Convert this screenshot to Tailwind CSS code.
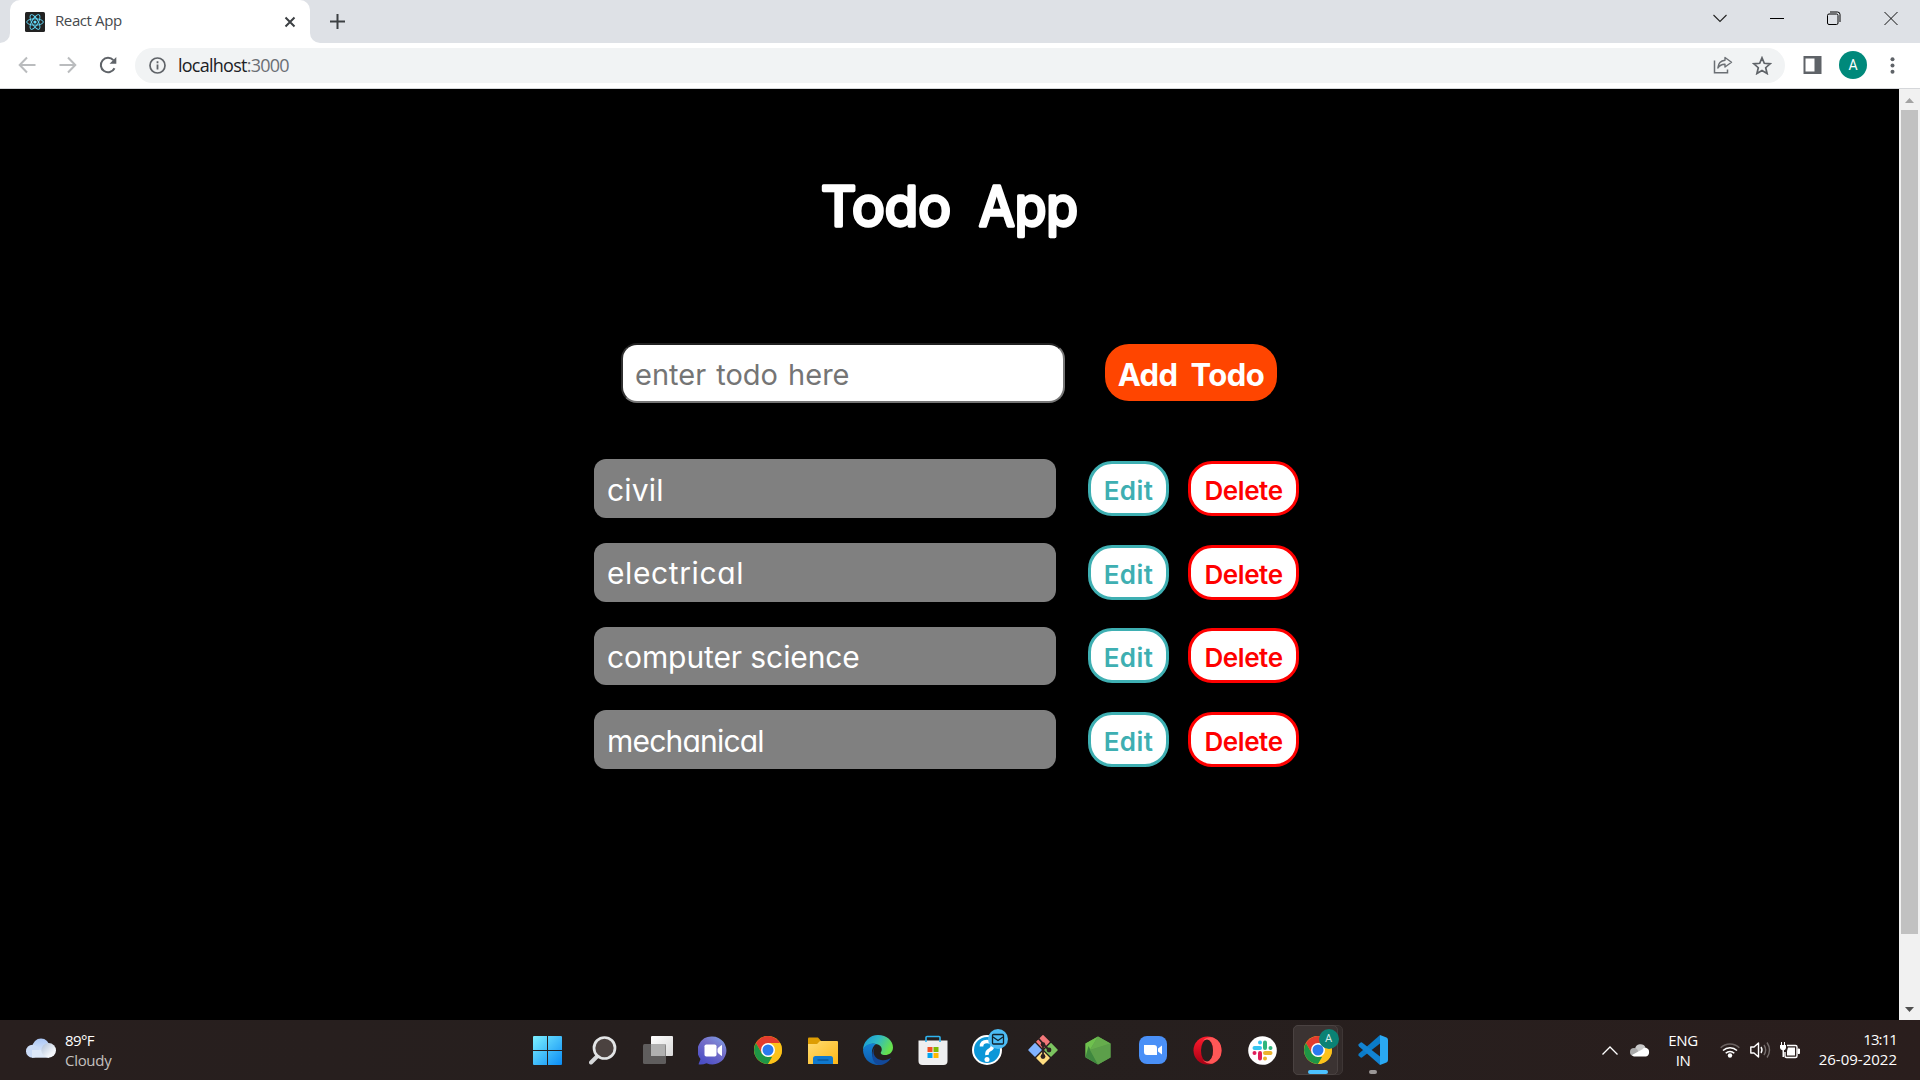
<!DOCTYPE html>
<html lang="en">
<head>
<meta charset="utf-8">
<title>React App</title>
<script src="https://cdn.jsdelivr.net/npm/@tailwindcss/browser@4"></script>
</head>
<body class="w-[1920px] h-[1080px] overflow-hidden flex flex-col bg-black font-['Open_Sans','Noto_Sans',sans-serif]">

<!-- tab strip -->
<header class="h-[43px] shrink-0 bg-[#dee1e6] flex">
  <div class="w-[10px] bg-white"><div class="w-full h-full bg-[#dee1e6] rounded-br-[10px]"></div></div>
  <div class="w-[300px] bg-white rounded-t-[10px] flex items-center pl-[15px] pr-[14px]">
    <svg class="w-5 h-5 shrink-0" viewBox="0 0 20 20"><rect width="20" height="20" rx="1.5" fill="#222"/><g fill="none" stroke="#61dafb" stroke-width=".9"><ellipse cx="10" cy="10" rx="8.3" ry="3.2"/><ellipse cx="10" cy="10" rx="8.3" ry="3.2" transform="rotate(60 10 10)"/><ellipse cx="10" cy="10" rx="8.3" ry="3.2" transform="rotate(120 10 10)"/></g><circle cx="10" cy="10" r="1.6" fill="#61dafb"/></svg>
    <span class="ml-[10px] -mt-[3px] text-[15px] leading-5 tracking-[-0.4px] text-[#45494d]">React App</span>
    <svg class="ml-auto w-[12px] h-[12px]" viewBox="0 0 12 12"><path d="M1.5 1.5l9 9M10.500 1.500l-9 9" stroke="#3c4043" stroke-width="2"/></svg>
  </div>
  <div class="w-[10px] bg-white"><div class="w-full h-full bg-[#dee1e6] rounded-bl-[10px]"></div></div>
  <svg class="ml-[10px] mt-[14px] w-[15px] h-[15px]" viewBox="0 0 15 15"><path d="M7.500 0v15M0 7.500h15" stroke="#3c4043" stroke-width="2"/></svg>
  <div class="ml-auto flex gap-[43px] pt-[11px] pr-[22px]">
    <svg class="w-[14px] h-[14px]" viewBox="0 0 14 14"><path d="M.5 4l6.500 6.500L13.500 4" fill="none" stroke="#222" stroke-width="1.100"/></svg>
    <svg class="w-[14px] h-[14px]" viewBox="0 0 14 14"><path d="M0 7.500h14" stroke="#000"/></svg>
    <svg class="w-[14px] h-[14px]" viewBox="0 0 14 14"><rect x=".5" y="3" width="10.500" height="10.500" rx="1.500" fill="none" stroke="#000"/><path d="M3 1h7.500q2.500 0 2.500 2.500V11" fill="none" stroke="#000"/></svg>
    <svg class="w-[14px] h-[14px]" viewBox="0 0 14 14"><path d="M.5 1l13 13M13.500 1l-13 13" stroke="#111"/></svg>
  </div>
</header>

<!-- toolbar -->
<div class="h-[46px] shrink-0 bg-white border-b border-[#d5d7da] flex items-center pl-[18px] pr-[25px] pb-px">
  <svg class="w-[18px] h-[18px]" viewBox="0 0 18 18"><path d="M17.500 9H2M9 1.500L1.700 9 9 16.500" fill="none" stroke="#babcbe" stroke-width="2"/></svg>
  <svg class="ml-[23px] w-[18px] h-[18px]" viewBox="0 0 18 18"><path d="M.5 9H16M9 1.500L16.300 9 9 16.500" fill="none" stroke="#babcbe" stroke-width="2"/></svg>
  <svg class="ml-[22px] w-[18px] h-[18px]" viewBox="0 0 18 18"><path d="M15.500 12.200A7.200 7.200 0 1 1 14.400 4.200" fill="none" stroke="#5f6368" stroke-width="2"/><path d="M17.300 1v6.700h-6.700z" fill="#5f6368"/></svg>
  <div class="ml-[18px] flex-1 h-[35px] rounded-full bg-[#f1f3f4] flex items-center pl-[14px] pr-[13px]">
    <svg class="w-[17px] h-[17px]" viewBox="0 0 17 17"><circle cx="8.500" cy="8.500" r="7.500" fill="none" stroke="#5f6368" stroke-width="1.700"/><path d="M8.500 7.400v5M8.500 4.300v1.900" stroke="#5f6368" stroke-width="1.800"/></svg>
    <span class="ml-[12px] text-[18px] leading-6 tracking-[-0.75px] text-[#202124]">localhost<span class="text-[#6b6f74]">:3000</span></span>
    <svg class="ml-auto w-[20px] h-[18px]" viewBox="0 0 20 18"><path d="M1.500 4.500V16.800H14.500V13.500" fill="none" stroke="#6b6f74" stroke-width="1.500"/><path d="M12 1.500L18.500 6.300 12 11V8.200Q7.500 8 4.800 12 5.500 5 12 4.300z" fill="none" stroke="#6b6f74" stroke-width="1.400" stroke-linejoin="round"/></svg>
    <svg class="ml-[19px] w-[20px] h-[19px]" viewBox="0 0 20 19"><path d="M10 1.800l2.300 5.500 5.900.5-4.500 3.900 1.400 5.800L10 14.400l-5.100 3.100 1.400-5.800L1.800 7.800l5.900-.5z" fill="none" stroke="#5f6368" stroke-width="1.700"/></svg>
  </div>
  <svg class="ml-[18px] w-[19px] h-[18px]" viewBox="0 0 19 18"><path fill="#5f6368" fill-rule="evenodd" d="M.5 0H18.500V18H.5zM2.500 2.500V15.500H11.500V2.500z"/></svg>
  <div class="ml-[17px] w-7 h-7 rounded-full bg-[#00897b] text-white text-[14px] leading-7 text-center font-[Roboto]">A</div>
  <svg class="ml-[23px] w-[5px] h-[17px]" viewBox="0 0 5 17"><g fill="#5f6368"><circle cx="2.500" cy="2.200" r="2"/><circle cx="2.500" cy="8.500" r="2"/><circle cx="2.500" cy="14.800" r="2"/></g></svg>
</div>

<!-- page -->
<div class="h-[931px] shrink-0 flex">
  <main class="w-[1899px] bg-black text-white font-['Comic_Sans_MS',Inter,sans-serif] [font-feature-settings:'cv11'_1]">
    <h1 class="pt-[71px] h-[254px] flex justify-center">
      <svg class="w-[280px] h-[100px] overflow-visible" viewBox="0 0 280 100" font-size="54.500" font-weight="400" fill="#fff" stroke="#fff" stroke-width="3.500" stroke-linejoin="round"><text x="11" y="66" textLength="130" lengthAdjust="spacingAndGlyphs">Todo</text><text x="169" y="66" textLength="99" lengthAdjust="spacingAndGlyphs">App</text></svg>
    </h1>
    <div class="flex ml-[621px] h-[60px]">
      <div class="w-[444px] h-[60px] rounded-[16px] bg-white border-2 border-t-[#212121] border-l-[#303030] border-r-[#767676] border-b-[#767676] pl-[12px] pt-[3px] text-[29px] leading-[54px] text-[#757575] whitespace-nowrap [word-spacing:2px]">enter todo here</div>
      <button class="ml-[40px] mt-px w-[172px] h-[57px] rounded-[24px] bg-[#ff4500] text-white font-bold text-[31px] leading-[61px] tracking-[-0.5px] [word-spacing:6px] whitespace-nowrap">Add Todo</button>
    </div>
    <ul class="mt-[56.330px] ml-[594px] flex flex-col gap-[25px]">
      <li class="flex h-[58.670px]">
        <div class="w-[462px] rounded-[12px] bg-[#808080] pl-[13px] text-[30px] leading-[62px] tracking-[0.2px]">civil</div>
        <button class="ml-[32px] mt-[2px] w-[81px] h-[55px] rounded-[24px] border-3 border-[#3eafb2] bg-white text-[#3eafb2] text-[26px] font-semibold leading-[53px] tracking-[0.4px]">Edit</button>
        <button class="ml-[19px] mt-[2px] w-[111px] h-[55px] rounded-[24px] border-3 border-[#ff0000] bg-white text-[#ff0000] text-[26px] font-semibold leading-[53px] tracking-[-0.4px]">Delete</button>
      </li>
      <li class="flex h-[58.670px]">
        <div class="w-[462px] rounded-[12px] bg-[#808080] pl-[13px] text-[30px] leading-[60px] tracking-[0.6px]">electrical</div>
        <button class="ml-[32px] mt-[2px] w-[81px] h-[55px] rounded-[24px] border-3 border-[#3eafb2] bg-white text-[#3eafb2] text-[26px] font-semibold leading-[53px] tracking-[0.4px]">Edit</button>
        <button class="ml-[19px] mt-[2px] w-[111px] h-[55px] rounded-[24px] border-3 border-[#ff0000] bg-white text-[#ff0000] text-[26px] font-semibold leading-[53px] tracking-[-0.4px]">Delete</button>
      </li>
      <li class="flex h-[58.670px]">
        <div class="w-[462px] rounded-[12px] bg-[#808080] pl-[13px] text-[30px] leading-[60px] tracking-[-0.1px]">computer science</div>
        <button class="ml-[32px] mt-[1px] w-[81px] h-[55px] rounded-[24px] border-3 border-[#3eafb2] bg-white text-[#3eafb2] text-[26px] font-semibold leading-[53px] tracking-[0.4px]">Edit</button>
        <button class="ml-[19px] mt-[1px] w-[111px] h-[55px] rounded-[24px] border-3 border-[#ff0000] bg-white text-[#ff0000] text-[26px] font-semibold leading-[53px] tracking-[-0.4px]">Delete</button>
      </li>
      <li class="flex h-[58.670px]">
        <div class="w-[462px] rounded-[12px] bg-[#808080] pl-[13px] text-[30px] leading-[62px] tracking-[-0.8px]">mechanical</div>
        <button class="ml-[32px] mt-[2px] w-[81px] h-[55px] rounded-[24px] border-3 border-[#3eafb2] bg-white text-[#3eafb2] text-[26px] font-semibold leading-[53px] tracking-[0.4px]">Edit</button>
        <button class="ml-[19px] mt-[2px] w-[111px] h-[55px] rounded-[24px] border-3 border-[#ff0000] bg-white text-[#ff0000] text-[26px] font-semibold leading-[53px] tracking-[-0.4px]">Delete</button>
      </li>
    </ul>
  </main>
  <div class="w-[21px] bg-[#f1f1f1] flex flex-col items-center">
    <svg class="w-[21px] h-[21px]" viewBox="0 0 21 21"><path d="M6 14l4.500-5 4.500 5z" fill="#a3a3a3"/></svg>
    <div class="w-[17px] h-[824px] bg-[#c1c1c1]"></div>
    <svg class="mt-auto w-[21px] h-[21px]" viewBox="0 0 21 21"><path d="M6 8l4.500 5 4.500-5z" fill="#505050"/></svg>
  </div>
</div>

<!-- taskbar -->
<footer class="h-[60px] shrink-0 flex items-center bg-linear-to-r from-[#281f1e] via-[#251f1e] to-[#2a1e1d]">
  <div class="w-[520px] flex items-center pl-[26px]">
    <svg class="w-[30px] h-[20px] -mt-[4px]" viewBox="0 0 30 20"><defs><linearGradient id="cl" x1="0" y1="0" x2="0" y2="1"><stop offset="0" stop-color="#a9c6f5"/><stop offset="1" stop-color="#e6eefb"/></linearGradient><linearGradient id="cl2" x1="0" y1="0" x2="1" y2="1"><stop offset="0" stop-color="#aebfd6"/><stop offset=".7" stop-color="#f3f6fb"/></linearGradient></defs><circle cx="15" cy="9" r="8.500" fill="url(#cl)"/><circle cx="6.500" cy="13.200" r="6.500" fill="#cbdcf7"/><path d="M6 12h17v7.700H6z" fill="#dde8f8"/><circle cx="22.700" cy="12.400" r="7.300" fill="url(#cl2)"/></svg>
    <div class="ml-[9px] text-[15px] leading-5 tracking-[-0.3px]"><div class="text-white tracking-[-0.6px]">89°F</div><div class="text-[#c4c0bf]">Cloudy</div></div>
  </div>

  <div class="flex h-[60px] w-[990px] items-center">
    <div class="w-[55px] flex justify-center"><svg class="w-[29px] h-[29px]" viewBox="0 0 29 29"><defs><linearGradient id="wn" x1="0" y1="0" x2="1" y2="1"><stop offset="0" stop-color="#7cf0ff"/><stop offset="1" stop-color="#0a8cf5"/></linearGradient></defs><path d="M0 1q0-1 1-1H14V14H0zM15 0H28q1 0 1 1V14H15zM0 15H14V29H1q-1 0-1-1zM15 15H29V28q0 1-1 1H15z" fill="url(#wn)"/></svg></div>
    <div class="w-[55px] flex justify-center"><svg class="w-[28px] h-[29px]" viewBox="0 0 28 29"><path d="M2 26.500L8.500 20" stroke="#d5d7d9" stroke-width="4" stroke-linecap="round"/><circle cx="15.500" cy="12" r="10.500" fill="#4b4240" stroke="#e3e5e6" stroke-width="2.700"/></svg></div>
    <div class="w-[55px] flex justify-center"><svg class="w-[30px] h-[28px]" viewBox="0 0 30 28"><defs><linearGradient id="tv" x1="0" y1="0" x2="1" y2="1"><stop offset="0" stop-color="#fff"/><stop offset="1" stop-color="#d9d9d9"/></linearGradient></defs><rect x="8" width="22" height="20" rx="1" fill="url(#tv)"/><rect y="8" width="23" height="20" rx="1.500" fill="#5f5d5d"/><rect x="8" y="8" width="14.500" height="12" fill="#b0b0b0"/></svg></div>
    <div class="w-[55px] flex justify-center"><svg class="w-[29px] h-[29px]" viewBox="0 0 29 29"><defs><linearGradient id="ch" x1="1" y1="0" x2=".3" y2="1"><stop offset="0" stop-color="#7fa5ea"/><stop offset=".45" stop-color="#7670c8"/><stop offset="1" stop-color="#4c4fc6"/></linearGradient></defs><path d="M14.500.5a14 14 0 1 1-6 26.700Q4.500 29 .5 28.300L2.500 23A14 14 0 0 1 14.500.5z" fill="url(#ch)"/><rect x="6.500" y="8.500" width="12" height="12" rx="1.800" fill="#fff"/><path d="M20 12.500l3.500-3v10l-3.500-3z" fill="#fff" stroke="#fff" stroke-linejoin="round"/></svg></div>
    <div class="w-[55px] flex justify-center"><svg class="w-[28px] h-[28px]" viewBox="0 0 28 28"><circle cx="14" cy="14" r="14" fill="#fbbc04"/><path d="M14 14L7.900 17.500 1.900 7A14 14 0 0 1 26.100 7H14z" fill="#e33b2e"/><path d="M1.900 7L7.900 17.500 14 21h6L14 28A14 14 0 0 1 1.900 7z" fill="#1e9546"/><path d="M14 28l6.100-10.500L14 14V7H26.100A14 14 0 0 1 14 28z" fill="#fcc21b"/><circle cx="14" cy="14" r="7" fill="#fff"/><circle cx="14" cy="14" r="5.500" fill="#2a7aef"/></svg></div>
    <div class="w-[55px] flex justify-center"><svg class="w-[30px] h-[27px]" viewBox="0 0 30 27"><defs><linearGradient id="fo" x1="0" y1="0" x2="1" y2="1"><stop offset="0" stop-color="#ffdc72"/><stop offset="1" stop-color="#fdb717"/></linearGradient></defs><path d="M0 1.500Q0 .5 1 .5H10l3 3.500v4H0z" fill="#dd9d03"/><path d="M0 7H9l3-3H29q1 0 1 1V27H0z" fill="url(#fo)"/><path d="M5 27V21.500Q5 19 7.500 19H22.500Q25 19 25 21.500V27z" fill="#0f79cf"/><path d="M9.500 23H20.500" stroke="#084f8f" stroke-width="1.200"/></svg></div>
    <div class="w-[55px] flex justify-center"><svg class="w-[30px] h-[30px]" viewBox="0 0 30 30"><defs><linearGradient id="e1" x1="0" y1="0" x2="1" y2=".4"><stop offset="0" stop-color="#1496d8"/><stop offset=".5" stop-color="#2fb8c6"/><stop offset="1" stop-color="#66e14e"/></linearGradient><linearGradient id="e2" x1="0" y1="0" x2="0" y2="1"><stop offset="0" stop-color="#1381d4"/><stop offset="1" stop-color="#0f5cae"/></linearGradient></defs><path d="M0 15A15 15 0 0 1 15 0C24 0 30 6 30 12.500 30 17.500 26 20 22 20 18.500 20 17.200 18.500 18 17 19.500 15 19 11 15 9.500 9 7.500 3 10 0 15z" fill="url(#e1)"/><path d="M0 15C2 9.500 8 7.500 13 9 10 11 8.500 14.500 9 19 10 25 15 28.500 19.500 29.300A15 15 0 0 1 0 15z" fill="url(#e2)"/><path d="M13 11C8 16 11 23.500 18 25 22 25.800 25.500 24.500 28 23 25 28 20 30.300 15.500 30 9 28.500 6.500 17 13 11z" fill="#12499a"/></svg></div>
    <div class="w-[55px] flex justify-center"><svg class="w-[30px] h-[30px]" viewBox="0 0 30 30"><path d="M.5 5.500H29.500V26q0 4-4 4H4.500q-4 0-4-4z" fill="#efefef"/><path d="M8 7V2.500Q8 1.500 9 1.500H21Q22 1.500 22 2.500V7" fill="none" stroke="#2fb4ef" stroke-width="1.600"/><path d="M9.500 12h5v5h-5z" fill="#f25022"/><path d="M15.500 12h5v5h-5z" fill="#7fba00"/><path d="M9.500 18h5v5h-5z" fill="#00a4ef"/><path d="M15.500 18h5v5h-5z" fill="#ffb900"/></svg></div>
    <div class="w-[55px] flex justify-center"><svg class="w-[36px] h-[37px] ml-[5px] -mt-[6px]" viewBox="0 0 36 37"><circle cx="15" cy="21" r="14" fill="#0c97d8" stroke="#fff" stroke-width="2"/><path d="M9.500 17.500Q9.500 12.500 15 12.500T20.500 17Q20.500 19.500 17.500 21T15 26" fill="none" stroke="#fff" stroke-width="3.600"/><circle cx="15" cy="30.500" r="2.500" fill="#fff"/><circle cx="26" cy="10" r="10" fill="#4cbcf4"/><rect x="20.500" y="5.500" width="11" height="9.500" rx="1" fill="none" stroke="#11222d" stroke-width="1.300"/><path d="M21 8l5 3.500L31 8" fill="none" stroke="#11222d" stroke-width="1.300"/></svg></div>
    <div class="w-[55px] flex justify-center"><svg class="w-[30px] h-[30px]" viewBox="0 0 30 30"><g stroke-width="1.500" stroke-linejoin="round"><path d="M15 .8L21 6.800 15 13 9 6.800z" fill="#f3787a" stroke="#f3787a"/><path d="M7 8.900L13 15 7 21 1 15z" fill="#80b3ff" stroke="#80b3ff"/><path d="M23 8.900L29 15 23 21 17 15z" fill="#7cc460" stroke="#7cc460"/><path d="M15 17L21 23 15 29 9 23z" fill="#ffdd80" stroke="#ffdd80"/></g><path d="M10.500 3.500L15 8.500V23M15 9l6 6" fill="none" stroke="#2e2222" stroke-width="1.800"/><g fill="#2e2222"><circle cx="15" cy="9.500" r="2.300"/><circle cx="21" cy="15" r="2.400"/><circle cx="15" cy="21.500" r="2.400"/></g></svg></div>
    <div class="w-[55px] flex justify-center"><svg class="w-[26px] h-[29px]" viewBox="0 0 26 29"><path d="M13 .5L25.500 7.500V21.500L13 28.500.5 21.500V7.500z" fill="#56a347"/><path d="M13 .5L.5 7.500V21z" fill="#6fc04e"/><path d="M.5 21L3.500 10 13 28.500z" fill="#3f873f"/><path d="M13 .5L25.500 7.500 5 14z" fill="#66ad4d"/><path d="M25.500 7.500V21.500L13 28.500 5 14z" fill="#5c9f4a"/></svg></div>
    <div class="w-[55px] flex justify-center"><svg class="w-[28px] h-[28px]" viewBox="0 0 28 28"><rect width="28" height="28" rx="8" fill="#4a90f7"/><path d="M5 9H15Q18 9 18 12V19H8Q5 19 5 16zM19 12.500L23 9.500V18.500L19 15.500z" fill="#fff"/></svg></div>
    <div class="w-[55px] flex justify-center"><svg class="w-[29px] h-[29px]" viewBox="0 0 29 29"><defs><linearGradient id="op" x1="0" y1="0" x2="0" y2="1"><stop offset="0" stop-color="#ff1b2d"/><stop offset="1" stop-color="#a70014"/></linearGradient></defs><circle cx="14.500" cy="14.500" r="14" fill="url(#op)"/><path d="M10 4.500Q14 .5 20 1.600A14 14 0 0 1 20 27.400Q14 28.500 10 24.500 20 27 20 14.500T10 4.500z" fill="#ff5757"/><ellipse cx="14" cy="14.500" rx="6" ry="11" fill="#281f1e"/></svg></div>
    <div class="w-[55px] flex justify-center"><svg class="w-[29px] h-[29px]" viewBox="0 0 29 29"><circle cx="14.500" cy="14.500" r="14.300" fill="#fff"/><g stroke-width="4" stroke-linecap="round"><path d="M6.500 12H12M12 6.500V6.400" stroke="#36c5f0"/><path d="M17 6.500V12M22.500 12V11.900" stroke="#2eb67d"/><path d="M17 17H22.500M17 22.500V22.400" stroke="#ecb22e"/><path d="M12 17V22.500M6.500 17V17.100" stroke="#e01e5a"/></g></svg></div>
    <div class="w-[55px] flex justify-center"><div class="relative w-[50px] h-[50px] flex items-center pl-[11px]">
      <div class="absolute inset-0 rounded-[5px] bg-[#332b2a] border border-[#3e3635]"></div>
      <div class="absolute left-0 top-0 w-[45px] h-[50px] rounded-[5px] bg-[#3b3332] border border-[#4a4241]"></div>
      <svg class="relative w-[28px] h-[28px]" viewBox="0 0 28 28"><circle cx="14" cy="14" r="14" fill="#fcc21b"/><path d="M14 14L7.900 17.500 1.900 7A14 14 0 0 1 26.100 7H14z" fill="#e33b2e"/><path d="M1.900 7L7.900 17.500 14 21h6L14 28A14 14 0 0 1 1.900 7z" fill="#1e9546"/><path d="M14 28l6.100-10.500L14 14V7H26.100A14 14 0 0 1 14 28z" fill="#fcc21b"/><circle cx="14" cy="14" r="7" fill="#fff"/><circle cx="14" cy="14" r="5.500" fill="#2a7aef"/></svg>
      <div class="absolute left-[26px] top-[4px] w-5 h-5 rounded-full bg-[#0b8274] text-[#d5ece9] text-[11px] leading-5 text-center font-[Roboto]">A</div>
      <div class="absolute left-[15px] bottom-[1px] w-[20px] h-[4px] rounded-full bg-[#4cc2ff]"></div>
    </div></div>
    <div class="w-[55px] h-[50px] flex justify-center items-center relative"><svg class="w-[30px] h-[30px]" viewBox="0 0 30 30"><path d="M22 0V8.500L4 22.500Q3 23 2 22L.5 20.500Q0 19.500 1 18.500z" fill="#0a7bc8"/><path d="M22 30V21.500L4 7.500Q3 7 2 8L.5 9.500Q0 10.500 1 11.500z" fill="#1283d2"/><path d="M22 0L28.500 2.500Q30 3.200 30 5V25Q30 26.800 28.500 27.500L22 30Z" fill="#2aa9f3"/></svg><div class="absolute left-[24px] bottom-[1px] w-[8px] h-[4px] rounded-full bg-[#9b9796]"></div></div>
  </div>

  <div class="ml-auto flex items-center h-[60px] pr-[23px] text-white">
    <svg class="w-[16px] h-[9px]" viewBox="0 0 16 9"><path d="M.5 8.500L8 1l7.500 7.500" fill="none" stroke="#fff" stroke-width="1.300"/></svg>
    <svg class="ml-[12px] w-[20px] h-[14px]" viewBox="0 0 20 14"><path d="M5 6A5.500 5.500 0 0 1 15.500 4.500L8 10H2Z" fill="#c9c9c9"/><circle cx="4" cy="9" r="4" fill="#aaa"/><path d="M2 12L12 6.500Q13 4.500 16 4.800A4.600 4.600 0 0 1 16 13.500H4Q2.500 13.200 2 12z" fill="#fff"/></svg>
    <div class="ml-[18px] w-[30px] text-center text-[15px] leading-5 tracking-[-0.4px]">ENG<br>IN</div>
    <svg class="ml-[22px] w-[20px] h-[16px]" viewBox="0 0 20 16"><g fill="none" stroke="#fff" stroke-width="1.500"><path d="M.7 5.800A13 13 0 0 1 19.300 5.800" stroke="#6a6261"/><path d="M3 8.500A10 10 0 0 1 17 8.500M5.700 11.200A6.200 6.200 0 0 1 14.300 11.200"/></g><circle cx="10" cy="13.500" r="2.200" fill="#fff"/></svg>
    <svg class="ml-[10px] w-[21px] h-[18px]" viewBox="0 0 21 18"><g fill="none" stroke="#fff" stroke-width="1.400"><path d="M.8 6H4L8.500 2V16L4 12H.8z" stroke-linejoin="round"/><path d="M11 6Q13 9 11 12"/><path d="M14 4Q17.300 9 14 14M17 1.500Q22 9 17 16.500" stroke="#756d6c"/></g></svg>
    <svg class="ml-[9px] w-[20px] h-[17px]" viewBox="0 0 20 17"><path d="M7 3.500H15.500Q17 3.500 17 5V14Q17 15.500 15.500 15.500H6.500Q5 15.500 5 14V10" fill="none" stroke="#fff" stroke-width="1.400"/><path d="M8 5.500H15V13.500H7V9z" fill="#fff"/><path d="M18 7h1.500v4.500H18zM1.500 0V3.500M4.500 0V3.500" fill="#fff" stroke="#fff"/><path d="M0 3H6V6Q5.500 8 4 8.200V15H2.500V8.200Q.5 8 0 6z" fill="#fff"/></svg>
    <div class="ml-[18px] -mt-[2px] w-[79px] flex flex-col items-end text-[15px] leading-5 whitespace-nowrap"><div class="tracking-[-0.9px]">13:11</div><div>26-09-2022</div></div>
  </div>
</footer>
</body>
</html>
